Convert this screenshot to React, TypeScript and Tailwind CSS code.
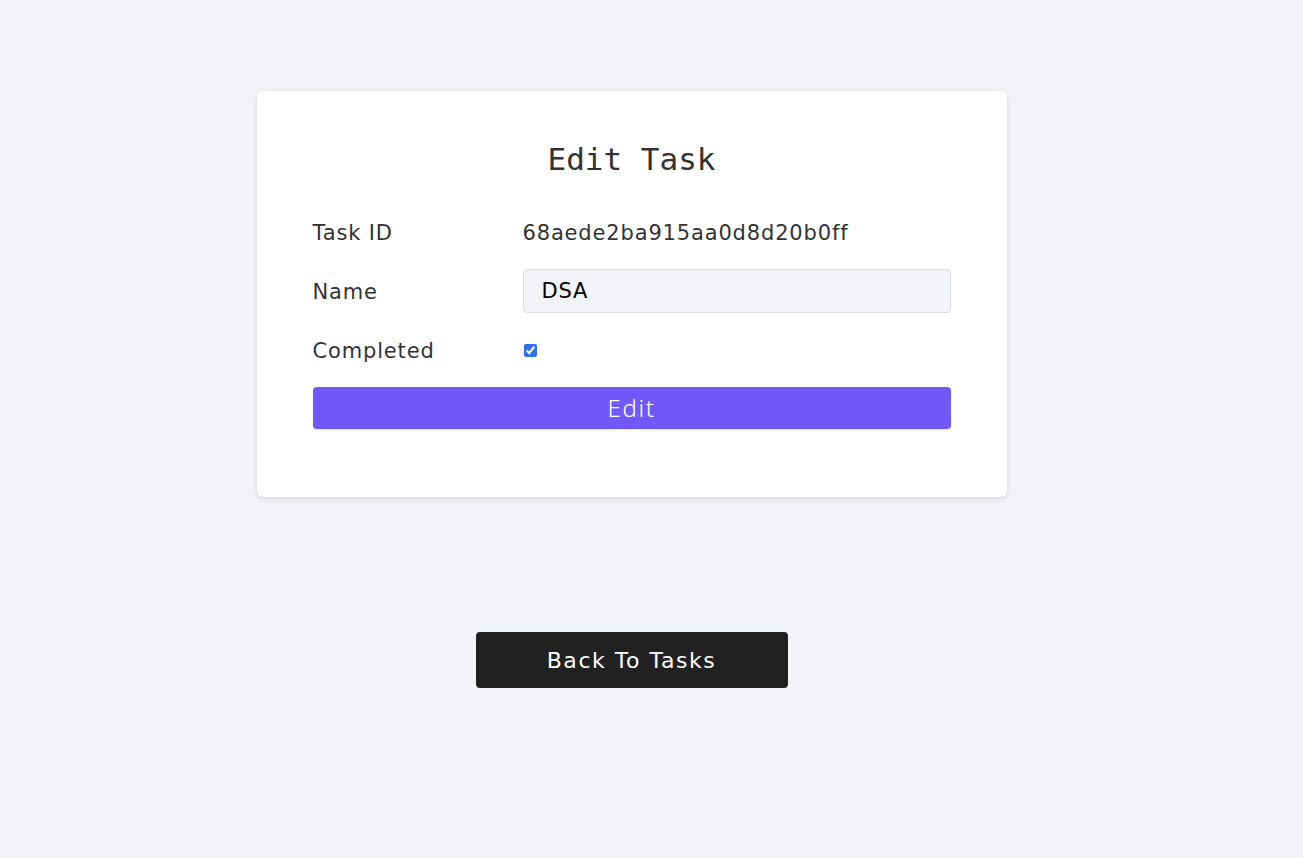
import { useState } from 'react'

const App = () => {
  const [name, setName] = useState("DSA")
  const [completed, setCompleted] = useState(true)

  return (
    <div className="min-h-screen w-full bg-[#f2f3f7] flex flex-col items-center pt-[91px] pr-10 font-['DejaVu_Sans',sans-serif] text-[#333]">
      <form
        onSubmit={(e: React.FormEvent<HTMLFormElement>) => e.preventDefault()}
        className="w-[750px] bg-white rounded-md shadow-[0_2px_6px_rgba(0,0,0,0.12)] px-14 pt-[50px] pb-[68px] flex flex-col"
      >
        <h1 className="text-center text-[31px] leading-[37px] font-['DejaVu_Sans_Mono',monospace] text-[#333] mb-[32px]">
          Edit Task
        </h1>
        <div className="flex flex-col gap-[15px]">
          <div className="flex items-center h-11 text-[21px] tracking-[0.04em]">
            <label className="w-[210px] pt-[3px]">Task ID</label>
            <span className="pt-[3px]">68aede2ba915aa0d8d20b0ff</span>
          </div>
          <div className="flex items-center h-11 text-[21px] tracking-[0.04em]">
            <label htmlFor="name" className="w-[210px] pt-[3px]">Name</label>
            <input
              id="name"
              name="name"
              type="text"
              value={name}
              onChange={(e) => setName(e.target.value)}
              className="flex-1 h-11 bg-[#f2f3f7] border border-[#dcdde2] rounded px-[18px] text-[21px] tracking-[0.04em] text-black focus:outline-none"
            />
          </div>
          <div className="flex items-center h-11 text-[21px] tracking-[0.04em]">
            <label htmlFor="completed" className="w-[210px] pt-[3px]">Completed</label>
            <input
              id="completed"
              type="checkbox"
              checked={completed}
              onChange={(e) => setCompleted(e.target.checked)}
              className="w-[13px] h-[13px] ml-[1px] accent-[#2f6fe8]"
            />
          </div>
          <button type="submit" className="h-[42px] bg-[#7257f9] text-white text-[24px] font-['Noto_Sans',sans-serif] font-light tracking-[0.07em] rounded shadow-[0_1px_2px_rgba(0,0,0,0.1)]">
            Edit
          </button>
        </div>
      </form>
      <button className="mt-[135px] w-[312px] h-[56px] bg-[#212121] text-white text-[22px] rounded tracking-[0.07em]">
        Back To Tasks
      </button>
    </div>
  )
}

export default App
